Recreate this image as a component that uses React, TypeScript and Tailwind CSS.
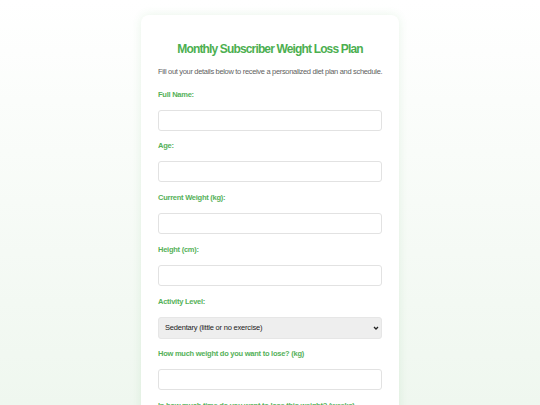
import React from 'react';

const fields = [
  'Full Name:',
  'Age:',
  'Current Weight (kg):',
  'Height (cm):',
];

const labelCls = 'block text-[7.5px] leading-[11px] font-bold text-[#55b159] tracking-[-0.25px]';

const Field: React.FC<{ label: string }> = ({ label }) => (
  <div className="mb-[9.75px]">
    <label className={labelCls}>{label}</label>
    <input
      type="text"
      className="mt-[10px] block w-full h-[21px] rounded-[3px] border border-[#e2e2e2] bg-white"
    />
  </div>
);

const App: React.FC = () => {
  return (
    <div
      className="h-[405px] overflow-hidden bg-gradient-to-b from-white to-[#eff7ef] flex justify-center pt-[15px]"
      style={{ fontFamily: '"Liberation Sans", Arial, sans-serif' }}
    >
      <div className="w-[258px] bg-white rounded-[8px] shadow-[0_0_10px_rgba(76,175,80,0.12)] px-[17px] pt-[27px] self-start">
        <h1 className="text-center text-[12px] leading-[14px] font-bold text-[#4caf50] tracking-[-0.85px]">
          Monthly Subscriber Weight Loss Plan
        </h1>
        <p className="mt-[11px] text-[7.5px] leading-[10px] text-[#5f5f5f] tracking-[-0.32px] whitespace-nowrap">
          Fill out your details below to receive a personalized diet plan and schedule.
        </p>
        <form className="mt-[11.5px]">
          {fields.map((f) => (
            <Field key={f} label={f} />
          ))}
          <div className="mb-[9.75px]">
            <label className={labelCls}>Activity Level:</label>
            <div className="relative mt-[10px]">
              <select className="appearance-none block w-full h-[22px] rounded-[3px] border border-[#e6e6e6] bg-[#eeeeee] text-[7.5px] text-[#222] tracking-[-0.2px] pl-[6px] pr-[14px]">
                <option>Sedentary (little or no exercise)</option>
                <option>Lightly active</option>
                <option>Moderately active</option>
                <option>Very active</option>
              </select>
              <svg
                className="pointer-events-none absolute right-[3px] top-1/2 -translate-y-1/2"
                width="6"
                height="5"
                viewBox="0 0 6 5"
              >
                <path d="M1 1.5 L3 3.5 L5 1.5" fill="none" stroke="#222" strokeWidth="1.3" />
              </svg>
            </div>
          </div>
          <Field label="How much weight do you want to lose? (kg)" />
          <Field label="In how much time do you want to lose this weight? (weeks)" />
        </form>
      </div>
    </div>
  );
};

export default App;
